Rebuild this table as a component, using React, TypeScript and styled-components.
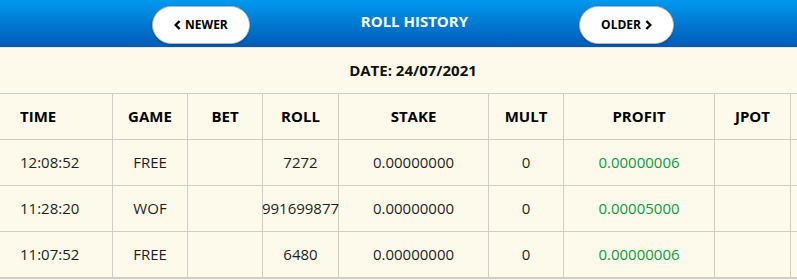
import React from "react";
import styled, { createGlobalStyle } from "styled-components";

const Global = createGlobalStyle`
  html, body { margin: 0; padding: 0; background: #fefaeb; overflow: hidden; }
  * { box-sizing: border-box; }
  body { font-family: "Open Sans", "Liberation Sans", sans-serif; }
`;

const Page = styled.div`
  width: 826px;
  background: #fefaeb;
`;

const TopBar = styled.header`
  height: 48px;
  background: linear-gradient(#0098f0, #005ab6);
  border-bottom: 1px solid #e6e6e6;
  display: flex;
  align-items: center;
  justify-content: center;
  gap: 111px;
`;

const NavButton = styled.button`
  height: 38px;
  padding: 0 21px;
  margin-top: 2px;
  border: 1px solid #b5b5b5;
  border-radius: 19px;
  background: #fff;
  box-shadow: 0 1px 2px rgba(0, 0, 0, 0.25);
  display: flex;
  align-items: center;
  gap: 4px;
  font-family: "Open Sans", sans-serif;
  font-weight: 700;
  font-size: 12px;
  color: #000;
  cursor: pointer;
`;

const Chevron = styled.svg`
  width: 7px;
  height: 10px;
  flex: none;
`;

const Title = styled.h1`
  margin: 0 0 5px;
  font-size: 15px;
  font-weight: 700;
  color: #fff;
`;

const DateBar = styled.div`
  height: 45px;
  display: flex;
  align-items: center;
  justify-content: center;
  padding-bottom: 1px;
  font-weight: 700;
  font-size: 15px;
  color: #111;
`;

const Grid = styled.div`
  display: grid;
  grid-template-columns: 113px 75px 75px 76px 150px 75px 151px 76px 35px;
  border-top: 1px solid #cdcdcd;
`;

const Cell = styled.div<{ $left?: boolean; $head?: boolean; $last?: boolean; $green?: boolean }>`
  height: ${(p) => (p.$last ? 47 : 46)}px;
  border-right: 1px solid #cdcdcd;
  border-bottom: ${(p) => (p.$last ? 2 : 1)}px solid #cdcdcd;
  display: flex;
  align-items: center;
  justify-content: ${(p) => (p.$left ? "flex-start" : "center")};
  padding-left: ${(p) => (p.$left ? 20 : 0)}px;
  padding-bottom: ${(p) => (p.$last ? 1 : 2)}px;
  font-size: 15px;
  font-weight: ${(p) => (p.$head ? 700 : 400)};
  color: ${(p) => (p.$green ? "#0b9a3c" : p.$head ? "#000" : "#1e1e1e")};
  white-space: nowrap;
`;

const headers = ["TIME", "GAME", "BET", "ROLL", "STAKE", "MULT", "PROFIT", "JPOT", ""];

const rows = [
  ["12:08:52", "FREE", "", "7272", "0.00000000", "0", "0.00000006", "", ""],
  ["11:28:20", "WOF", "", "991699877", "0.00000000", "0", "0.00005000", "", ""],
  ["11:07:52", "FREE", "", "6480", "0.00000000", "0", "0.00000006", "", ""],
];

const ChevronIcon = ({ dir }: { dir: "left" | "right" }) => (
  <Chevron viewBox="0 0 7 10" aria-hidden="true">
    <polyline
      points={dir === "left" ? "5.6,1 1.6,5 5.6,9" : "1.4,1 5.4,5 1.4,9"}
      fill="none"
      stroke="#000"
      strokeWidth="2.4"
      strokeLinecap="butt"
      strokeLinejoin="miter"
    />
  </Chevron>
);

export default function App() {
  return (
    <Page>
      <Global />
      <TopBar>
        <NavButton>
          <ChevronIcon dir="left" />
          NEWER
        </NavButton>
        <Title>ROLL HISTORY</Title>
        <NavButton>
          OLDER
          <ChevronIcon dir="right" />
        </NavButton>
      </TopBar>
      <DateBar>DATE: 24/07/2021</DateBar>
      <Grid>
        {headers.map((h, i) => (
          <Cell key={"h" + i} $head $left={i === 0}>
            {h}
          </Cell>
        ))}
        {rows.map((r, ri) =>
          r.map((v, ci) => (
            <Cell
              key={ri + "-" + ci}
              $left={ci === 0}
              $green={ci === 6}
              $last={ri === rows.length - 1}
            >
              {v}
            </Cell>
          ))
        )}
      </Grid>
    </Page>
  );
}
